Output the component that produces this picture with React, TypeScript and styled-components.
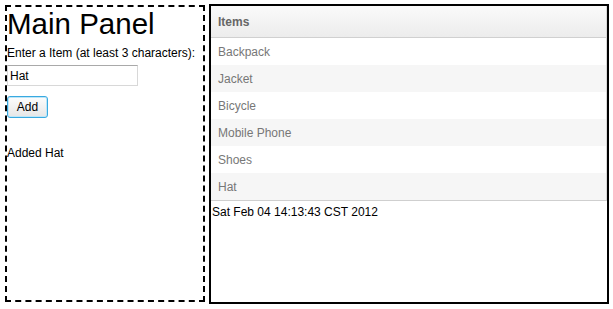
import React from "react";
import styled, { createGlobalStyle } from "styled-components";

const Global = createGlobalStyle`
  html, body { margin: 0; padding: 0; background: #fff; }
  body { font-family: "Liberation Sans", Arial, sans-serif; font-size: 12px; color: #000; }
`;

const Page = styled.div`
  display: flex;
  align-items: flex-start;
  padding: 4px 0 0 5px;
  gap: 4px;
`;

const MainPanel = styled.div`
  box-sizing: border-box;
  width: 200px;
  height: 297px;
  margin-top: 1px;
  border: 2px dashed #000;
  display: flex;
  flex-direction: column;
`;

const Title = styled.h1`
  margin: 0;
  font-size: 29.5px;
  font-weight: normal;
  line-height: 34px;
  white-space: nowrap;
`;

const Label = styled.div`
  margin-top: 5px;
  font-size: 12px;
  line-height: 14px;
  white-space: nowrap;
`;

const TextInput = styled.input`
  box-sizing: border-box;
  width: 131px;
  height: 21px;
  margin: 5px 0 0 0;
  padding: 0 2px;
  font-family: "Liberation Sans", Arial, sans-serif;
  font-size: 12px;
  color: #000;
  border: 1px solid #d8d8d8;
  border-top-color: #a9a9a9;
  outline: none;
`;

const AddButton = styled.button`
  box-sizing: border-box;
  align-self: flex-start;
  width: 41px;
  height: 22px;
  margin-top: 10px;
  padding: 0;
  font-family: "Liberation Sans", Arial, sans-serif;
  font-size: 12px;
  color: #000;
  border: 1px solid #39a9e0;
  border-radius: 3px;
  background: linear-gradient(#fdfdfd, #e6e6e6);
  box-shadow: 0 0 0 1px #bde6f8 inset;
`;

const Status = styled.div`
  margin-top: 28px;
  font-size: 12px;
  line-height: 14px;
`;

const ItemsPanel = styled.div`
  box-sizing: border-box;
  width: 400px;
  height: 300px;
  border: 2px solid #000;
  display: flex;
  flex-direction: column;
`;

const Grid = styled.div`
  border-right: 1px solid #d8d8d8;
  border-bottom: 1px solid #cfcfcf;
`;

const HeaderCell = styled.div`
  box-sizing: border-box;
  height: 32px;
  padding: 0 0 0 7px;
  display: flex;
  align-items: center;
  font-weight: bold;
  font-size: 12px;
  color: #666;
  background: linear-gradient(#fafafa, #ececec);
  border-bottom: 1px solid #d0d0d0;
`;

const Row = styled.div<{ $alt: boolean }>`
  height: 27px;
  padding-left: 7px;
  display: flex;
  align-items: center;
  font-size: 12px;
  color: #777;
  background: ${(p) => (p.$alt ? "#f6f6f6" : "#fff")};
`;

const Stamp = styled.div`
  margin-top: 4px;
  padding-left: 1px;
  font-size: 12px;
  line-height: 14px;
`;

const items = ["Backpack", "Jacket", "Bicycle", "Mobile Phone", "Shoes", "Hat"];

export default function App() {
  return (
    <>
      <Global />
      <Page>
        <MainPanel>
          <Title>Main Panel</Title>
          <Label>Enter a Item (at least 3 characters):</Label>
          <TextInput defaultValue="Hat" />
          <AddButton>Add</AddButton>
          <Status>Added Hat</Status>
        </MainPanel>
        <ItemsPanel>
          <Grid>
            <HeaderCell>Items</HeaderCell>
            {items.map((it, i) => (
              <Row key={it} $alt={i % 2 === 1}>
                {it}
              </Row>
            ))}
          </Grid>
          <Stamp>Sat Feb 04 14:13:43 CST 2012</Stamp>
        </ItemsPanel>
      </Page>
    </>
  );
}
